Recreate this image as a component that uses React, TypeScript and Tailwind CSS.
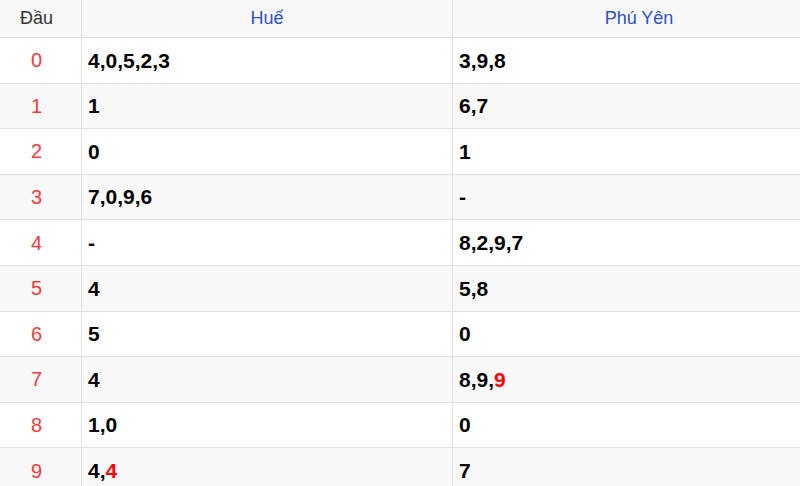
type Part = { v: string; hot?: boolean };

const rows: { head: string; hue: Part[] | null; phuyen: Part[] | null }[] = [
  { head: '0', hue: [{ v: '4' }, { v: '0' }, { v: '5' }, { v: '2' }, { v: '3' }], phuyen: [{ v: '3' }, { v: '9' }, { v: '8' }] },
  { head: '1', hue: [{ v: '1' }], phuyen: [{ v: '6' }, { v: '7' }] },
  { head: '2', hue: [{ v: '0' }], phuyen: [{ v: '1' }] },
  { head: '3', hue: [{ v: '7' }, { v: '0' }, { v: '9' }, { v: '6' }], phuyen: null },
  { head: '4', hue: null, phuyen: [{ v: '8' }, { v: '2' }, { v: '9' }, { v: '7' }] },
  { head: '5', hue: [{ v: '4' }], phuyen: [{ v: '5' }, { v: '8' }] },
  { head: '6', hue: [{ v: '5' }], phuyen: [{ v: '0' }] },
  { head: '7', hue: [{ v: '4' }], phuyen: [{ v: '8' }, { v: '9' }, { v: '9', hot: true }] },
  { head: '8', hue: [{ v: '1' }, { v: '0' }], phuyen: [{ v: '0' }] },
  { head: '9', hue: [{ v: '4' }, { v: '4', hot: true }], phuyen: [{ v: '7' }] },
];

function Tail({ parts }: { parts: Part[] | null }) {
  if (!parts) return <span>-</span>;
  return (
    <span>
      {parts.map((p, i) => (
        <span key={i}>
          {i > 0 && ','}
          <span className={p.hot ? 'text-[#ff0000]' : ''}>{p.v}</span>
        </span>
      ))}
    </span>
  );
}

export default function App() {
  return (
    <div className="w-[800px] h-[486px] overflow-hidden bg-white font-['Liberation_Sans',Arial,sans-serif]">
      <div className="-ml-2 w-[833px]">
        {/* header */}
        <div className="grid grid-cols-[90px_371px_372px] h-[38px] bg-[#f8f8f8] border-b border-[#e1e1e1] text-[18px]">
          <div className="flex items-center justify-center text-[#333] border-r border-[#e1e1e1]">Đầu</div>
          <div className="flex items-center justify-center text-[#2f50cc] border-r border-[#e1e1e1]">Huế</div>
          <div className="flex items-center justify-center text-[#2f50cc]">Phú Yên</div>
        </div>

        {rows.map((r, i) => (
          <div
            key={r.head}
            className={`grid grid-cols-[90px_371px_372px] h-[45.6px] border-b border-[#e1e1e1] ${i % 2 === 1 ? 'bg-[#f8f8f8]' : 'bg-white'}`}
          >
            <div className="flex items-center justify-center text-[20px] text-[#f43b3b] border-r border-[#e1e1e1]">
              {r.head}
            </div>
            <div className="flex items-center pl-[6px] text-[21px] font-bold text-black border-r border-[#e1e1e1]">
              <Tail parts={r.hue} />
            </div>
            <div className="flex items-center pl-[6px] text-[21px] font-bold text-black">
              <Tail parts={r.phuyen} />
            </div>
          </div>
        ))}
      </div>
    </div>
  );
}
